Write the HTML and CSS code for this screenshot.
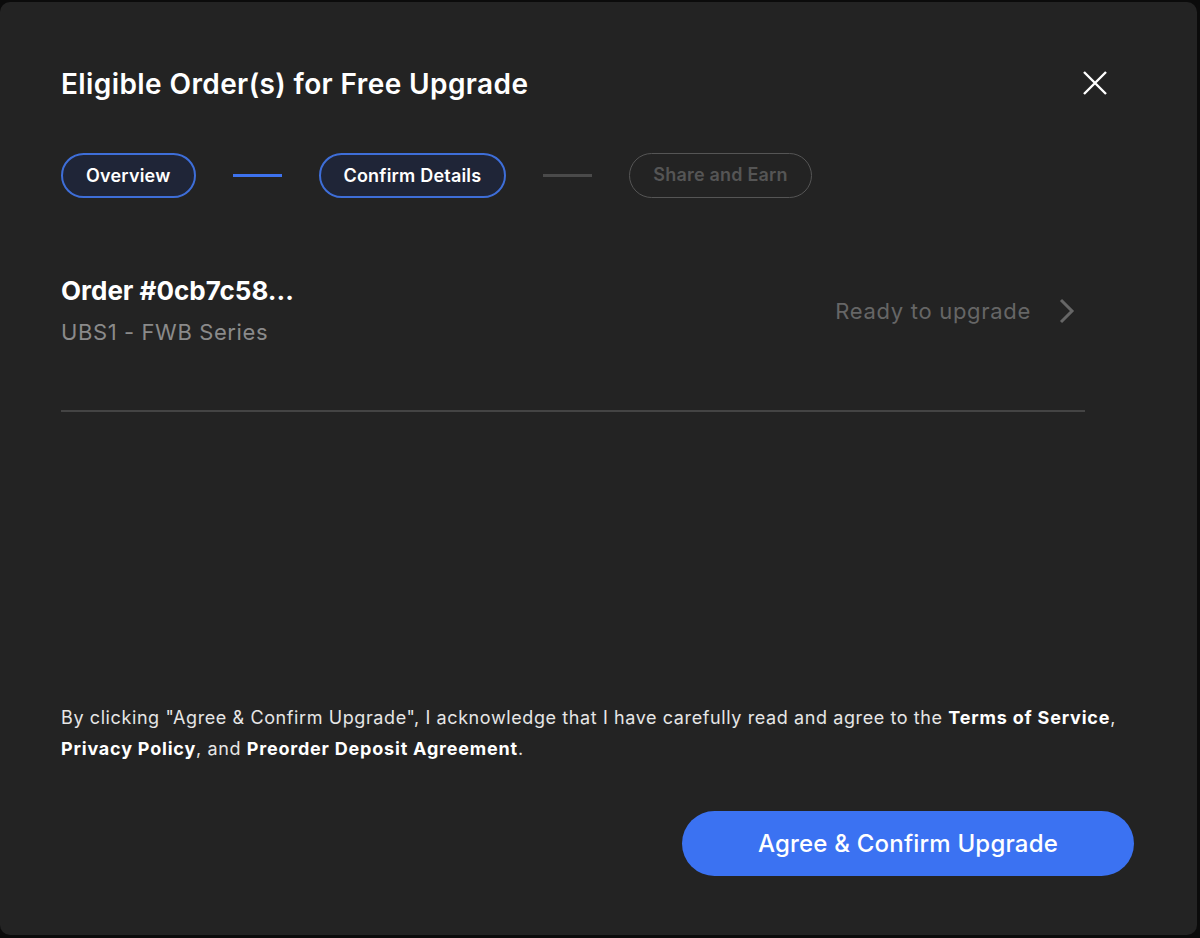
FILE: index.html
```html
<!DOCTYPE html>
<html>
<head>
<meta charset="utf-8">
<title>Eligible Order(s) for Free Upgrade</title>
<link rel="stylesheet" href="styles.css">
</head>
<body>
<div class="modal">
	<div class="head">
		<h1>Eligible Order(s) for Free Upgrade</h1>
		<svg class="close" width="24" height="24" viewBox="0 0 24 24"><path d="M1 1L23 23M23 1L1 23" stroke="#fff" stroke-width="2.4" fill="none"/></svg>
	</div>
	<div class="steps">
		<span class="step on">Overview</span>
		<span class="bar on"></span>
		<span class="step on">Confirm Details</span>
		<span class="bar"></span>
		<span class="step">Share and Earn</span>
	</div>
	<div class="order">
		<div class="info">
			<div class="name">Order #0cb7c58...</div>
			<div class="series">UBS1 - FWB Series</div>
		</div>
		<div class="status">
			Ready to upgrade
			<svg width="16" height="26" viewBox="0 0 16 26"><path d="M2 2L13 13L2 24" stroke="#666" stroke-width="3" fill="none"/></svg>
		</div>
	</div>
	<div class="space"></div>
	<p class="terms">By clicking "Agree &amp; Confirm Upgrade", I acknowledge that I have carefully read and agree to the <b>Terms of Service</b>, <b>Privacy Policy</b>, and <b>Preorder Deposit Agreement</b>.</p>
	<div class="foot">
		<button class="agree">Agree &amp; Confirm Upgrade</button>
	</div>
</div>
</body>
</html>
```

FILE: styles.css
```css
*{margin:0;padding:0;box-sizing:border-box;}
body{background:#0b0b0b;overflow:hidden;font-family:Inter,"Noto Sans",sans-serif;}
.modal{width:1197px;height:933px;margin:2px 3px 0 0;background:#232323;border-radius:10px;padding:65px 0 59px 61px;display:flex;flex-direction:column;}
.head{display:flex;align-items:center;justify-content:space-between;height:34px;padding-right:90px;}
h1{font-size:28px;line-height:34px;font-weight:600;color:#fff;letter-spacing:0.4px;}
.close{display:block;margin-top:-2px;}
.steps{display:flex;align-items:center;gap:37px;margin-top:52px;}
.step{height:45px;line-height:41px;padding:0 23px;border-radius:23px;border:2px solid #3e6ed8;background:#1f2537;color:#fff;font-size:18px;font-weight:600;letter-spacing:0.2px;}
.step:last-child{background:none;border:1.5px solid #555;color:#555;line-height:42px;}
.bar{width:49px;height:3px;background:#4a4a4a;}
.bar.on{background:#3d72ee;}
.order{display:flex;align-items:center;justify-content:space-between;margin-top:78px;margin-right:112px;padding:0 10px 64px 0;border-bottom:2px solid #444;}
.name{font-size:26px;line-height:30px;font-weight:700;color:#fff;}
.series{font-size:22px;line-height:28px;color:#8a8a8a;margin-top:12px;letter-spacing:0.6px;}
.status{display:flex;align-items:center;gap:28px;font-size:22px;color:#666;letter-spacing:0.7px;}
.status svg{display:block;}
.space{flex:1;}
.terms{font-size:18px;line-height:31px;color:#e6e6e6;padding-right:45px;letter-spacing:0.6px;}
.terms b{color:#fff;font-weight:700;letter-spacing:0.8px;}
.foot{display:flex;justify-content:flex-end;margin-top:47px;padding-right:63px;}
.agree{width:452px;height:65px;border:none;border-radius:33px;background:#3b72f2;color:#fff;font-family:Inter,"Noto Sans",sans-serif;font-size:24px;font-weight:500;letter-spacing:0.2px;}
```
